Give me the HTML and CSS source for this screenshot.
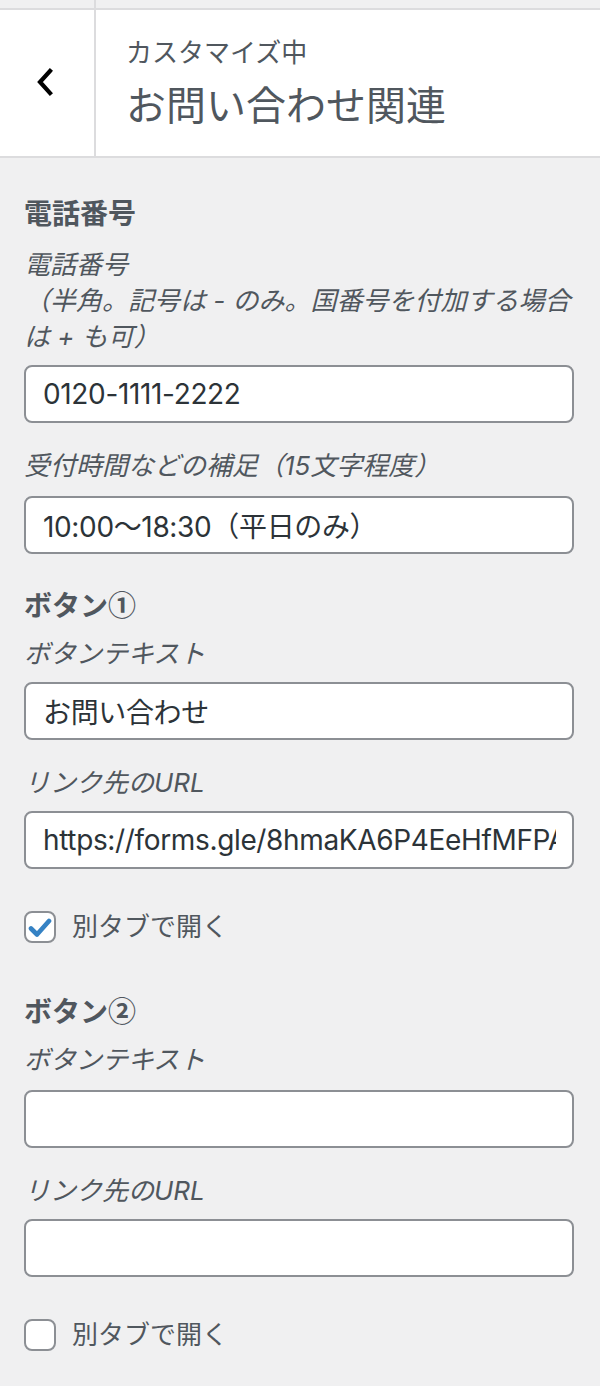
FILE: index.html
```html
<!DOCTYPE html>
<html lang="ja">
<head>
<meta charset="utf-8">
<title>お問い合わせ関連</title>
<link rel="stylesheet" href="styles.css">
</head>
<body>
<div class="panel">
  <div class="topstrip"><div class="topstrip-left"></div></div>
  <div class="header">
    <button class="back" type="button" aria-label="戻る">
      <svg width="20" height="30" viewBox="0 0 20 30" aria-hidden="true"><path d="M15 4 L5 15 L15 26" fill="none" stroke="#000" stroke-width="4.2" stroke-linecap="square" stroke-linejoin="miter"/></svg>
    </button>
    <div class="header-text">
      <span class="header-sub">カスタマイズ中</span>
      <h3 class="header-title">お問い合わせ関連</h3>
    </div>
  </div>

  <div class="content">
    <div class="section-title first">電話番号</div>
    <div class="desc d-first">電話番号<br>（半角。記号は - のみ。国番号を付加する場合は + も可）</div>
    <input class="field i-a" type="text" value="0120-1111-2222">
    <div class="desc d-next">受付時間などの補足（15文字程度）</div>
    <input class="field i-b" type="text" value="10:00〜18:30（平日のみ）">

    <div class="section-title after-input">ボタン①</div>
    <div class="desc d-title">ボタンテキスト</div>
    <input class="field i-a" type="text" value="お問い合わせ">
    <div class="desc d-next">リンク先のURL</div>
    <input class="field i-c" type="text" value="https://forms.gle/8hmaKA6P4EeHfMFPA">
    <label class="check">
      <span class="box checked"><svg width="24" height="20" viewBox="0 0 24 20" aria-hidden="true"><path d="M3 10.5 L9 16.5 L21 3" fill="none" stroke="#3582c4" stroke-width="4.6" stroke-linecap="round" stroke-linejoin="round"/></svg></span>
      <span class="check-label">別タブで開く</span>
    </label>

    <div class="section-title after-check">ボタン②</div>
    <div class="desc d-title">ボタンテキスト</div>
    <input class="field i-b" type="text" value="">
    <div class="desc d-next">リンク先のURL</div>
    <input class="field i-a" type="text" value="">
    <label class="check check2">
      <span class="box"></span>
      <span class="check-label">別タブで開く</span>
    </label>
  </div>
</div>
</body>
</html>
```

FILE: styles.css
```css
* { box-sizing: border-box; }
html, body { margin: 0; padding: 0; }
body {
  background: #f0f0f1;
  font-family: Inter, "Noto Sans CJK JP", sans-serif;
  color: #50575e;
  width: 600px;
  min-height: 1386px;
}
.panel { width: 600px; }
.topstrip {
  height: 10px;
  border-bottom: 2px solid #dcdcde;
  display: flex;
}
.topstrip-left {
  width: 96px;
  border-right: 2px solid #dcdcde;
}
.header {
  display: flex;
  background: #fff;
  border-bottom: 2px solid #dcdcde;
  height: 148px;
}
.back {
  width: 96px;
  border: 0;
  border-right: 2px solid #dcdcde;
  background: #fff;
  padding: 0 0 2px 0;
  display: flex;
  align-items: center;
  justify-content: center;
  cursor: pointer;
}
.back svg { margin-right: 4px; }
.header-text {
  display: flex;
  flex-direction: column;
  padding: 25px 0 0 30px;
}
.header-sub {
  font-size: 26px;
  line-height: 36px;
  color: #50575e;
}
.header-title {
  margin: 9px 0 0 0;
  font-size: 40px;
  line-height: 52px;
  font-weight: 400;
  color: #50575e;
}
.content {
  padding: 0 26px 40px 24px;
  display: flex;
  flex-direction: column;
}
.section-title {
  font-family: "Noto Sans CJK JP", sans-serif;
  font-size: 28px;
  line-height: 36px;
  font-weight: 700;
  color: #50575e;
}
.section-title.first { margin-top: 36px; }
.section-title.after-input { margin-top: 32px; }
.section-title.after-check { margin-top: 49px; }
.desc {
  font-size: 26px;
  line-height: 36px;
  font-style: italic;
  color: #50575e;
}
.d-first { margin-top: 17px; }
.d-title { margin-top: 14px; }
.d-next { margin-top: 25px; }
.field {
  display: block;
  width: 100%;
  height: 58px;
  border: 2px solid #8c8f94;
  border-radius: 8px;
  background: #fff;
  padding: 0 16px 0 17px;
  font-family: Inter, "Noto Sans CJK JP", sans-serif;
  font-size: 28px;
  letter-spacing: -0.35px;
  color: #2c3338;
  outline: none;
}
.i-a { margin-top: 10px; }
.i-b { margin-top: 12px; }
.i-c { margin-top: 10px; }
.check {
  display: flex;
  align-items: center;
  gap: 16px;
  margin-top: 42px;
  height: 32px;
}
.check2 { margin-top: 42px; }
.box {
  width: 32px;
  height: 32px;
  border: 2px solid #8c8f94;
  border-radius: 8px;
  background: #fff;
  display: flex;
  align-items: center;
  justify-content: center;
  flex: none;
}
.box svg { margin-top: 1px; }
.check-label {
  font-size: 26px;
  line-height: 36px;
  color: #50575e;
}
```
